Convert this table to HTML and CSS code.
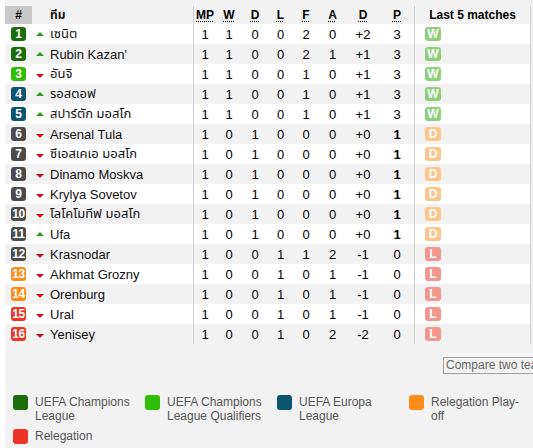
FILE: index.html
```html
<!DOCTYPE html>
<html>
<head>
<meta charset="utf-8">
<link rel="stylesheet" href="styles.css">
</head>
<body>
<div class="wrap">
  <div class="table">
    <div class="row head">
      <div class="c-rank head-rank">#</div>
      <div class="c-arrow"></div>
      <div class="c-team">ทีม</div>
      <div class="c-num"><span class="abbr">MP</span></div>
      <div class="c-num"><span class="abbr">W</span></div>
      <div class="c-num"><span class="abbr">D</span></div>
      <div class="c-num"><span class="abbr">L</span></div>
      <div class="c-num"><span class="abbr">F</span></div>
      <div class="c-num"><span class="abbr">A</span></div>
      <div class="c-num"><span class="abbr">D</span></div>
      <div class="c-num c-pts"><span class="abbr">P</span></div>
      <div class="c-form head-form">Last 5 matches</div>
    </div>

    <div class="row">
      <div class="c-rank"><span class="rank r-cl">1</span></div>
      <div class="c-arrow"><span class="up"></span></div>
      <div class="c-team">เซนิต</div>
      <div class="c-num">1</div><div class="c-num">1</div><div class="c-num">0</div><div class="c-num">0</div><div class="c-num">2</div><div class="c-num">0</div><div class="c-num">+2</div>
      <div class="c-num c-pts">3</div>
      <div class="c-form"><span class="res win">W</span></div>
    </div>
    <div class="row">
      <div class="c-rank"><span class="rank r-cl">2</span></div>
      <div class="c-arrow"><span class="up"></span></div>
      <div class="c-team">Rubin Kazan'</div>
      <div class="c-num">1</div><div class="c-num">1</div><div class="c-num">0</div><div class="c-num">0</div><div class="c-num">2</div><div class="c-num">1</div><div class="c-num">+1</div>
      <div class="c-num c-pts">3</div>
      <div class="c-form"><span class="res win">W</span></div>
    </div>
    <div class="row">
      <div class="c-rank"><span class="rank r-clq">3</span></div>
      <div class="c-arrow"><span class="down"></span></div>
      <div class="c-team">อันจิ</div>
      <div class="c-num">1</div><div class="c-num">1</div><div class="c-num">0</div><div class="c-num">0</div><div class="c-num">1</div><div class="c-num">0</div><div class="c-num">+1</div>
      <div class="c-num c-pts">3</div>
      <div class="c-form"><span class="res win">W</span></div>
    </div>
    <div class="row">
      <div class="c-rank"><span class="rank r-el">4</span></div>
      <div class="c-arrow"><span class="up"></span></div>
      <div class="c-team">รอสตอฟ</div>
      <div class="c-num">1</div><div class="c-num">1</div><div class="c-num">0</div><div class="c-num">0</div><div class="c-num">1</div><div class="c-num">0</div><div class="c-num">+1</div>
      <div class="c-num c-pts">3</div>
      <div class="c-form"><span class="res win">W</span></div>
    </div>
    <div class="row">
      <div class="c-rank"><span class="rank r-el">5</span></div>
      <div class="c-arrow"><span class="up"></span></div>
      <div class="c-team">สปาร์ตัก มอสโก</div>
      <div class="c-num">1</div><div class="c-num">1</div><div class="c-num">0</div><div class="c-num">0</div><div class="c-num">1</div><div class="c-num">0</div><div class="c-num">+1</div>
      <div class="c-num c-pts">3</div>
      <div class="c-form"><span class="res win">W</span></div>
    </div>
    <div class="row">
      <div class="c-rank"><span class="rank r-mid">6</span></div>
      <div class="c-arrow"><span class="down"></span></div>
      <div class="c-team">Arsenal Tula</div>
      <div class="c-num">1</div><div class="c-num">0</div><div class="c-num">1</div><div class="c-num">0</div><div class="c-num">0</div><div class="c-num">0</div><div class="c-num">+0</div>
      <div class="c-num c-pts bold">1</div>
      <div class="c-form"><span class="res draw">D</span></div>
    </div>
    <div class="row">
      <div class="c-rank"><span class="rank r-mid">7</span></div>
      <div class="c-arrow"><span class="down"></span></div>
      <div class="c-team">ซีเอสเคเอ มอสโก</div>
      <div class="c-num">1</div><div class="c-num">0</div><div class="c-num">1</div><div class="c-num">0</div><div class="c-num">0</div><div class="c-num">0</div><div class="c-num">+0</div>
      <div class="c-num c-pts bold">1</div>
      <div class="c-form"><span class="res draw">D</span></div>
    </div>
    <div class="row">
      <div class="c-rank"><span class="rank r-mid">8</span></div>
      <div class="c-arrow"><span class="down"></span></div>
      <div class="c-team">Dinamo Moskva</div>
      <div class="c-num">1</div><div class="c-num">0</div><div class="c-num">1</div><div class="c-num">0</div><div class="c-num">0</div><div class="c-num">0</div><div class="c-num">+0</div>
      <div class="c-num c-pts bold">1</div>
      <div class="c-form"><span class="res draw">D</span></div>
    </div>
    <div class="row">
      <div class="c-rank"><span class="rank r-mid">9</span></div>
      <div class="c-arrow"><span class="down"></span></div>
      <div class="c-team">Krylya Sovetov</div>
      <div class="c-num">1</div><div class="c-num">0</div><div class="c-num">1</div><div class="c-num">0</div><div class="c-num">0</div><div class="c-num">0</div><div class="c-num">+0</div>
      <div class="c-num c-pts bold">1</div>
      <div class="c-form"><span class="res draw">D</span></div>
    </div>
    <div class="row">
      <div class="c-rank"><span class="rank r-mid">10</span></div>
      <div class="c-arrow"><span class="down"></span></div>
      <div class="c-team">โลโคโมทีฟ มอสโก</div>
      <div class="c-num">1</div><div class="c-num">0</div><div class="c-num">1</div><div class="c-num">0</div><div class="c-num">0</div><div class="c-num">0</div><div class="c-num">+0</div>
      <div class="c-num c-pts bold">1</div>
      <div class="c-form"><span class="res draw">D</span></div>
    </div>
    <div class="row">
      <div class="c-rank"><span class="rank r-mid">11</span></div>
      <div class="c-arrow"><span class="up"></span></div>
      <div class="c-team">Ufa</div>
      <div class="c-num">1</div><div class="c-num">0</div><div class="c-num">1</div><div class="c-num">0</div><div class="c-num">0</div><div class="c-num">0</div><div class="c-num">+0</div>
      <div class="c-num c-pts bold">1</div>
      <div class="c-form"><span class="res draw">D</span></div>
    </div>
    <div class="row">
      <div class="c-rank"><span class="rank r-mid">12</span></div>
      <div class="c-arrow"><span class="down"></span></div>
      <div class="c-team">Krasnodar</div>
      <div class="c-num">1</div><div class="c-num">0</div><div class="c-num">0</div><div class="c-num">1</div><div class="c-num">1</div><div class="c-num">2</div><div class="c-num">-1</div>
      <div class="c-num c-pts">0</div>
      <div class="c-form"><span class="res loss">L</span></div>
    </div>
    <div class="row">
      <div class="c-rank"><span class="rank r-rpo">13</span></div>
      <div class="c-arrow"><span class="down"></span></div>
      <div class="c-team">Akhmat Grozny</div>
      <div class="c-num">1</div><div class="c-num">0</div><div class="c-num">0</div><div class="c-num">1</div><div class="c-num">0</div><div class="c-num">1</div><div class="c-num">-1</div>
      <div class="c-num c-pts">0</div>
      <div class="c-form"><span class="res loss">L</span></div>
    </div>
    <div class="row">
      <div class="c-rank"><span class="rank r-rpo">14</span></div>
      <div class="c-arrow"><span class="down"></span></div>
      <div class="c-team">Orenburg</div>
      <div class="c-num">1</div><div class="c-num">0</div><div class="c-num">0</div><div class="c-num">1</div><div class="c-num">0</div><div class="c-num">1</div><div class="c-num">-1</div>
      <div class="c-num c-pts">0</div>
      <div class="c-form"><span class="res loss">L</span></div>
    </div>
    <div class="row">
      <div class="c-rank"><span class="rank r-rel">15</span></div>
      <div class="c-arrow"><span class="down"></span></div>
      <div class="c-team">Ural</div>
      <div class="c-num">1</div><div class="c-num">0</div><div class="c-num">0</div><div class="c-num">1</div><div class="c-num">0</div><div class="c-num">1</div><div class="c-num">-1</div>
      <div class="c-num c-pts">0</div>
      <div class="c-form"><span class="res loss">L</span></div>
    </div>
    <div class="row">
      <div class="c-rank"><span class="rank r-rel">16</span></div>
      <div class="c-arrow"><span class="down"></span></div>
      <div class="c-team">Yenisey</div>
      <div class="c-num">1</div><div class="c-num">0</div><div class="c-num">0</div><div class="c-num">1</div><div class="c-num">0</div><div class="c-num">2</div><div class="c-num">-2</div>
      <div class="c-num c-pts">0</div>
      <div class="c-form"><span class="res loss">L</span></div>
    </div>
  </div>

  <div class="compare-row">
    <button class="compare">Compare two teams</button>
  </div>

  <div class="legend">
    <div class="leg-item"><span class="leg-box r-cl"></span><span class="leg-text">UEFA Champions League</span></div>
    <div class="leg-item"><span class="leg-box r-clq"></span><span class="leg-text">UEFA Champions League Qualifiers</span></div>
    <div class="leg-item"><span class="leg-box r-el"></span><span class="leg-text">UEFA Europa League</span></div>
    <div class="leg-item"><span class="leg-box r-rpo"></span><span class="leg-text">Relegation Play-off</span></div>
    <div class="leg-item"><span class="leg-box r-rel"></span><span class="leg-text">Relegation</span></div>
  </div>
</div>
</body>
</html>
```

FILE: styles.css
```css
html, body {
  margin: 0;
  padding: 0;
  background: #ffffff;
  overflow: hidden;
}

body {
  font-family: "Liberation Sans", Arial, "Noto Sans Thai", "DejaVu Sans", sans-serif;
  font-size: 13px;
  color: #000;
}

.wrap {
  margin-left: 5px;
  width: 600px;
  height: 448px;
  background: #f2f2f2;
  padding-top: 6px;
  box-sizing: border-box;
}

.table {
  width: 526px;
}

.row {
  display: grid;
  grid-template-columns: 27px 18px 144px 22px 26px 26px 25px 26px 27px 34px 35px 116px;
  height: 20px;
  align-items: center;
  background: #f2f2f2;
}

.row:nth-child(even) {
  background: #ffffff;
}

.row.head {
  height: 18px;
  background: #f2f2f2;
  font-weight: bold;
  font-size: 12px;
}

.row > div {
  height: 100%;
  display: flex;
  align-items: center;
  box-sizing: border-box;
}

.c-rank {
  justify-content: center;
}

.head-rank {
  background: #c8c8c8;
}

.c-arrow {
  padding-left: 4px;
}

.c-team {
  border-right: 1px solid #d0d0d0;
  white-space: nowrap;
  color: #111;
}

.c-num {
  justify-content: center;
}

.c-pts {
  border-right: 1px solid #d0d0d0;
}

.bold {
  font-weight: bold;
}

.c-form {
  border-right: 1px solid #d0d0d0;
  padding-left: 10px;
}

.head-form {
  justify-content: center;
  padding-left: 0;
}

.abbr {
  text-decoration: underline dotted;
  text-underline-offset: 2px;
}

.rank {
  display: inline-flex;
  align-items: center;
  justify-content: center;
  width: 15px;
  height: 14px;
  border-radius: 3px;
  color: #fff;
  font-weight: bold;
  font-size: 12px;
  letter-spacing: -0.3px;
}

.r-cl { background: #1b6c0b; }
.r-clq { background: #2fbd05; }
.r-el { background: #0b5470; }
.r-mid { background: #4b4b4b; }
.r-rpo { background: #ff8c1a; }
.r-rel { background: #ee3327; }

.up, .down {
  display: block;
  width: 0;
  height: 0;
  border-left: 4px solid transparent;
  border-right: 4px solid transparent;
}

.up {
  border-bottom: 4px solid #2e9a1e;
}

.down {
  border-top: 4px solid #cc1020;
  margin-top: 3px;
}

.res {
  display: inline-flex;
  align-items: center;
  justify-content: center;
  width: 16px;
  height: 14px;
  border-radius: 3px;
  color: #fff;
  font-weight: bold;
  font-size: 12px;
}

.win { background: #8dcf7a; }
.draw { background: #fbc58c; }
.loss { background: #f2968e; }

.compare-row {
  margin-top: 13px;
  padding-left: 438px;
  display: flex;
}

.compare {
  font-family: "Liberation Sans", Arial, sans-serif;
  font-size: 12px;
  color: #666;
  background: #f2f2f2;
  border: 1px solid #a0a0a0;
  height: 17px;
  padding: 0 2px;
  white-space: nowrap;
  line-height: 15px;
}

.legend {
  margin-top: 21px;
  padding-left: 8px;
  display: flex;
  flex-wrap: wrap;
  width: 528px;
  row-gap: 6px;
}

.leg-item {
  width: 132px;
  display: flex;
  gap: 7px;
  align-items: flex-start;
}

.leg-box {
  flex: none;
  width: 15px;
  height: 15px;
  border-radius: 3px;
}

.leg-text {
  width: 98px;
  font-size: 12px;
  line-height: 14px;
  color: #555;
}
```
